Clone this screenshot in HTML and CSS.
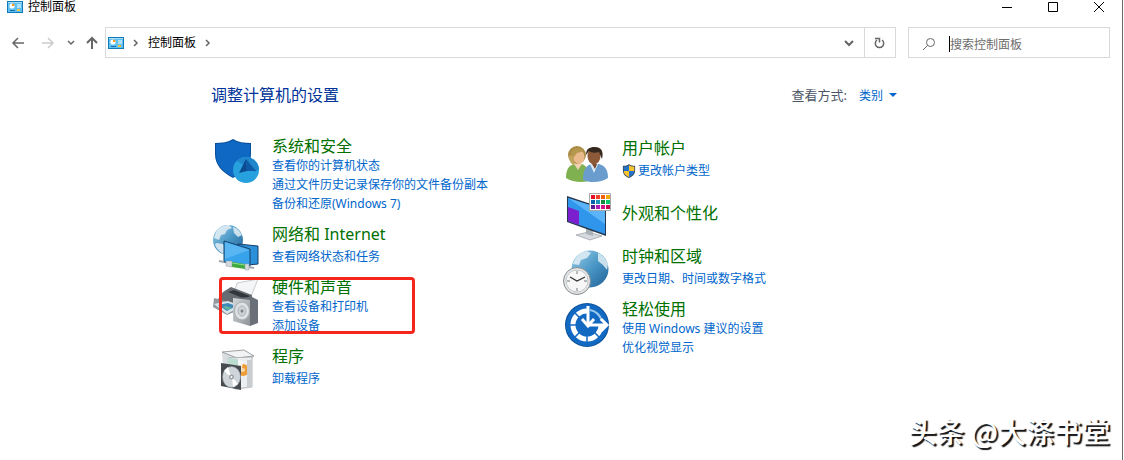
FILE: index.html
```html
<!DOCTYPE html>
<html lang="zh-CN">

<head>
  <title>控制面板</title>
  <meta charset="utf-8">
  <meta name="viewport" content="width=device-width, initial-scale=1">
  <link rel="stylesheet" href="styles.css">
</head>

<body>

  <!-- shared symbols -->
  <svg width="0" height="0" class="defs">
    <defs>
      <linearGradient id="sea" x1="0" y1="0" x2="1" y2="1">
        <stop offset="0" stop-color="#9fd0ea"/>
        <stop offset="0.5" stop-color="#4a98c6"/>
        <stop offset="1" stop-color="#1f5f96"/>
      </linearGradient>
      <linearGradient id="metal" x1="0" y1="0" x2="1" y2="1">
        <stop offset="0" stop-color="#d5d8da"/>
        <stop offset="1" stop-color="#8d9399"/>
      </linearGradient>
    </defs>
    <symbol id="panel" viewBox="0 0 16 12">
      <rect x="0.5" y="0.5" width="15" height="11" fill="#5fc0f2" stroke="#1279b8"/>
      <rect x="1" y="1" width="14" height="1" fill="#a5defa"/>
      <circle cx="5" cy="5" r="2.6" fill="#fff"/>
      <path d="M5 5V2.4A2.6 2.6 0 0 1 7.6 5z" fill="#f39a1c"/>
      <path d="M10 4h4M10 6h4" stroke="#fff"/>
      <path d="M3 9.5h5" stroke="#176aa8"/>
      <path d="M10 9h3" stroke="#f0c33c" stroke-width="2"/>
    </symbol>
  </svg>

  <div class="window">
    <header class="titlebar">
      <svg class="app-icon"><use href="#panel"/></svg>
      <span class="title">控制面板</span>
      <button class="win-btn" aria-label="最小化"><svg width="12" height="12"><path d="M1 6.5h10" stroke="#000"/></svg></button>
      <button class="win-btn" aria-label="最大化"><svg width="12" height="12"><path d="M1.5 1.5h9v9h-9z" stroke="#000" fill="none"/></svg></button>
      <button class="win-btn" aria-label="关闭"><svg width="12" height="12"><path d="M1 1l10 10M11 1L1 11" stroke="#000"/></svg></button>
    </header>

    <div class="toolbar">
      <nav class="history">
        <button class="nav-btn" aria-label="后退"><svg width="14" height="14"><path d="M13 7H2M7 2L2 7l5 5" class="line"/></svg></button>
        <button class="nav-btn" aria-label="前进" disabled><svg width="14" height="14"><path d="M1 7h11M7 2l5 5-5 5" class="line light"/></svg></button>
        <button class="nav-btn small" aria-label="最近"><svg width="8" height="8"><path d="M1 2l3 3 3-3" class="line"/></svg></button>
        <button class="nav-btn up" aria-label="上移"><svg width="14" height="14"><path d="M7 13V2M2 7l5-5 5 5" class="line thick"/></svg></button>
      </nav>
      <div class="address">
        <svg class="app-icon"><use href="#panel"/></svg>
        <svg class="sep" width="6" height="8"><path d="M1 1l3 3-3 3" class="line"/></svg>
        <a class="crumb" href="#">控制面板</a>
        <svg class="sep" width="6" height="8"><path d="M1 1l3 3-3 3" class="line"/></svg>
        <button class="addr-btn expand" aria-label="展开"><svg width="10" height="8"><path d="M1 2l4 4 4-4" class="line thick"/></svg></button>
        <button class="addr-btn refresh" aria-label="刷新"><svg width="12" height="14"><path d="M1 2.5h4.500v4M8 4a4.200 4.200 0 1 1-5 0" class="line"/></svg></button>
      </div>
      <label class="search">
        <svg width="14" height="14"><circle cx="8.5" cy="5.5" r="4" class="line thin"/><path d="M5.5 8.5L1 13" class="line thin"/></svg>
        <input type="text" placeholder="搜索控制面板" aria-label="搜索控制面板">
      </label>
    </div>

    <main>
      <div class="heading">
        <h1>调整计算机的设置</h1>
        <label for="view">查看方式:</label>
        <select id="view">
          <option>类别</option>
          <option>大图标</option>
          <option>小图标</option>
        </select>
        <svg width="8" height="4"><path d="M0 0h8L4 4z" fill="#0066cc"/></svg>
      </div>

      <div class="columns">
        <div class="column">
          <section class="item">
            <svg class="icon" viewBox="0 0 48 48">
              <path d="M22 3c5 3 11 4 18 4v11c0 11-7 18-18 24C11 36 4 29 4 18V7c7 0 13-1 18-4z" fill="#084f9c"/>
              <path d="M22 4.500c5 2 10 3.500 17 3.500V18c0 10-6 17-17 23C11 35 5 28 5 18V8C12 8 17 6.500 22 4.500z" fill="#0f68c4"/>
              <circle cx="35" cy="34" r="13" fill="#27a0de"/>
              <path d="M26 25A13 13 0 0 1 48 33l-4 3z" fill="#1f86cc"/>
              <path d="M35 23l10 12-9 0z" fill="#0f5aa8"/>
              <path d="M35 23l1 12-8 2z" fill="#0b4a90"/>
            </svg>
            <div class="text">
              <h2><a href="#">系统和安全</a></h2>
              <a href="#">查看你的计算机状态</a>
              <a href="#">通过文件历史记录保存你的文件备份副本</a>
              <a href="#">备份和还原(Windows 7)</a>
            </div>
          </section>

          <section class="item short">
            <svg class="icon" viewBox="0 0 48 48">
              <circle cx="17" cy="16" r="15" fill="url(#sea)"/>
              <path d="M5 8c3-5 8-7 13-7l3 3-5 2-2 4-4 1-2 5-5-2zM22 3c4 1 7 4 9 8l-4 2-4-4zM6 19l6 1 3 4-2 6c-5-2-8-6-9-10z" fill="#e4eff5" opacity="0.85"/>
              <path d="M27 20l20 2v18l-20 2z" fill="#2c8fda" stroke="#173f66"/>
              <path d="M13 17l26 8v17l-26-4z" fill="#37a3ea" stroke="#173f66"/>
              <path d="M14 18l24 8-24 9z" fill="#5ab6f3"/>
              <path d="M21 38l13 2v5l-13-2z" fill="#3faa3f"/>
              <path d="M21 39l13 2" stroke="#8fdc82"/>
              <path d="M8 37l5 1M37 43l6 1" stroke="#9fa8ae" stroke-width="2"/>
              <path d="M15 37h6v6l-6-1zM34 40h4v6h-4z" fill="#d3dbe0" stroke="#8f989e" stroke-width="0.5"/>
            </svg>
            <div class="text">
              <h2><a href="#">网络和 Internet</a></h2>
              <a href="#">查看网络状态和任务</a>
            </div>
          </section>

          <section class="item marked">
            <svg class="icon" viewBox="0 0 48 48">
              <path d="M26 6l21-4-8 20-16-6z" fill="#f4f5f6" stroke="#b5b9bd" stroke-width="0.7"/>
              <path d="M12 15l8-5 21 8v10l-24 9-14-9z" fill="#666c72"/>
              <path d="M17 15l6-2 16 6-5 3z" fill="#31363b"/>
              <path d="M3 21l22 6v7l-9 4-14-8z" fill="#92989e"/>
              <path d="M3 27l14-3 13 5-14 8z" fill="#d9e4eb"/>
              <path d="M7 28l10-2 8 3-9 5z" fill="#3e89b8"/>
              <path d="M14 29l7 2-4 2-5-3z" fill="#62b99d"/>
              <path d="M22 21l19-1 6 3v23l-8 3z" fill="#6a7077"/>
              <path d="M22 21l17 2v26l-17-5z" fill="url(#metal)"/>
              <ellipse cx="31" cy="34" rx="7.5" ry="9" fill="#dfe2e4" stroke="#a7acb0"/>
              <ellipse cx="31" cy="34" rx="4" ry="5" fill="#cdd1d4" stroke="#b0b5b9"/>
              <circle cx="31" cy="34" r="1.5" fill="#7b8187"/>
            </svg>
            <div class="text">
              <h2><a href="#">硬件和声音</a></h2>
              <a href="#">查看设备和打印机</a>
              <a href="#">添加设备</a>
            </div>
          </section>

          <section class="item short">
            <svg class="icon" viewBox="0 0 48 48">
              <path d="M11 6l22-2 10 6-2 3v28l-14 2-14-9z" fill="#dadddf"/>
              <path d="M11 6l22-2 10 6-17 2z" fill="#f2f3f4" stroke="#898e92" stroke-width="0.8"/>
              <path d="M17 12l24-1v30l-17 2z" fill="#eceeef" stroke="#a5a9ac" stroke-width="0.8"/>
              <path d="M17 12l10 1v25H14z" fill="#bcdccf"/>
              <circle cx="32" cy="24" r="6" fill="#ef9c35"/>
              <circle cx="32" cy="24" r="2" fill="#f8d8a8"/>
              <path d="M27 13l5 3-4 24h-1z" fill="#f8f9fa" opacity="0.8"/>
              <path d="M36 14h5v27l-5 1z" fill="#c9cdd0"/>
              <path d="M10 17l20 3v24l-20-4z" fill="#464b50"/>
              <ellipse cx="20.500" cy="31" rx="9" ry="10.5" fill="#cfd6da" stroke="#8e959b" stroke-width="0.6"/>
              <path d="M20 31l-7-6 4-4zM21 31l6 7-5 3z" fill="#fff"/>
              <circle cx="20.5" cy="31" r="2.5" fill="#9aa2a8"/>
              <circle cx="20.5" cy="31" r="1" fill="#fff"/>
            </svg>
            <div class="text">
              <h2><a href="#">程序</a></h2>
              <a href="#">卸载程序</a>
            </div>
          </section>
        </div>

        <div class="column second">
          <section class="item short">
            <svg class="icon" viewBox="0 0 48 48">
              <path d="M5 40c0-9 3-13 9-14h7c5 2 7 7 7 17-8 2-17 1-23-3z" fill="#7fb150"/>
              <path d="M13 26l4 6 4-6z" fill="#f1d1b1"/>
              <circle cx="16" cy="17" r="9" fill="#a98b45"/>
              <path d="M8 18c0 5 2 8 5 9l3-12z" fill="#c0a45b"/>
              <ellipse cx="18" cy="19" rx="5.5" ry="7" fill="#eab98c"/>
              <path d="M10 15c2-5 8-7 13-2l-7 2-4 5z" fill="#b5974e"/>
              <path d="M22 42c0-10 3-15 9-16h7c7 2 9 7 9 14-7 5-18 5-25 2z" fill="#6a9dce"/>
              <path d="M29 26l4 9 4-9z" fill="#dcebf7"/>
              <path d="M31 26l3 5 2-5z" fill="#7a4c2e"/>
              <ellipse cx="33" cy="18" rx="6.5" ry="8.5" fill="#8c5a38"/>
              <path d="M25 17c0-6 3-8 9-8 6 0 9 4 7 12l-3-7c-4 1-8 1-10-1z" fill="#34281f"/>
            </svg>
            <div class="text">
              <h2><a href="#">用户帐户</a></h2>
              <a href="#" class="admin">
                <svg class="uac" viewBox="0 0 16 16">
                  <path d="M8 0c2 2 4 2 7 2v5c0 5-3 7-7 9-4-2-7-4-7-9V2c3 0 5 0 7-2z" fill="#3d4c60"/>
                  <path d="M8 1.5V8H2V3c2 0 4 0 6-1.5zM8 8h6c0 3-2 5-6 7z" fill="#2472c8"/>
                  <path d="M8 1.5V8h6V3c-2 0-4 0-6-1.5zM8 8H2c0 3 2 5 6 7z" fill="#fbc42d"/>
                </svg>更改帐户类型</a>
            </div>
          </section>

          <section class="item single">
            <svg class="icon" viewBox="0 0 48 48">
              <path d="M15 44l12-3 14 4-12 4z" fill="#d5dade" stroke="#969ca2" stroke-width="0.7"/>
              <path d="M25 36l7 3v6l-7-2z" fill="#aab1b7"/>
              <path d="M6 5l39 13v27L6 31z" fill="#26384d"/>
              <path d="M7 7l37 12v24L7 30z" fill="#2f96ec"/>
              <path d="M7 7l37 12v14z" fill="#5ab4f7"/>
              <path d="M7 16l11 4v14L7 30z" fill="#7c20cf"/>
              <path d="M28.5 2.5h21v17h-21z" fill="#fff" stroke="#a8a8a8"/>
              <path d="M30 4h4v4h-4z" fill="#e81123"/><path d="M35 4h4v4h-4z" fill="#f0432b"/><path d="M40 4h4v4h-4z" fill="#f7630c"/><path d="M45 4h4v4h-4z" fill="#f7a80c"/>
              <path d="M30 9h4v4h-4z" fill="#0063b1"/><path d="M35 9h4v4h-4z" fill="#1a96bd"/><path d="M40 9h4v4h-4z" fill="#10893e"/><path d="M45 9h4v4h-4z" fill="#00c76a"/>
              <path d="M30 14h4v4h-4z" fill="#5a189a"/><path d="M35 14h4v4h-4z" fill="#b01cb8"/><path d="M40 14h4v4h-4z" fill="#d3108c"/><path d="M45 14h4v4h-4z" fill="#c30052"/>
            </svg>
            <div class="text">
              <h2><a href="#">外观和个性化</a></h2>
            </div>
          </section>

          <section class="item short">
            <svg class="icon" viewBox="0 0 48 48">
              <circle cx="29" cy="23" r="18.5" fill="url(#sea)"/>
              <path d="M12 18c2-7 7-12 14-13l4 2-4 5-6 2-2 5zM37 7c5 2 8 6 10 11l-1 6-4-5-5-4z" fill="#e2eef5" opacity="0.85"/>
              <circle cx="16" cy="35" r="13.5" fill="#e3e5e6" stroke="#868c91"/>
              <circle cx="16" cy="35" r="11" fill="#f7f7f7" stroke="#c3c7ca"/>
              <path d="M16 25v3M16 42v3M6 35h3M23 35h3" stroke="#777"/>
              <path d="M9 31l7 4 8-4" fill="none" stroke="#333" stroke-width="1.3"/>
            </svg>
            <div class="text">
              <h2><a href="#">时钟和区域</a></h2>
              <a href="#">更改日期、时间或数字格式</a>
            </div>
          </section>

          <section class="item">
            <svg class="icon" viewBox="0 0 48 48">
              <circle cx="26" cy="26" r="22" fill="#0b4f97"/>
              <circle cx="26" cy="26" r="21" fill="#1269c2"/>
              <circle cx="26" cy="26" r="14" fill="none" stroke="#fff" stroke-width="5"/>
              <path d="M26 26V9a17 17 0 0 1 17 17z" fill="#1269c2"/>
              <path d="M29 11a16 16 0 0 1 12 11" fill="none" stroke="#9cc8ee" stroke-width="2"/>
              <path d="M26 26L11 11M26 26H8M26 26L11 41M26 26v18M26 26l15 15" stroke="#1269c2" stroke-width="1.5"/>
              <circle cx="26" cy="26" r="10" fill="#1269c2"/>
              <path d="M27 7v19M21 20l6 7 6-7" fill="none" stroke="#fff" stroke-width="3"/>
              <path d="M27 26h18M40 20l6 6-6 6" fill="none" stroke="#fff" stroke-width="3"/>
            </svg>
            <div class="text">
              <h2><a href="#">轻松使用</a></h2>
              <a href="#">使用 Windows 建议的设置</a>
              <a href="#">优化视觉显示</a>
            </div>
          </section>
        </div>
      </div>
    </main>

    <div class="watermark">头条 @大涤书堂</div>
  </div>

</body>

</html>
```

FILE: styles.css
```css
*,
*::after {
  box-sizing: border-box;
  margin: 0;
  padding: 0;
}

body {
  font-family: "Noto Sans", "Noto Sans CJK SC", sans-serif;
  font-size: 12px;
  line-height: 19px;
  color: #000;
  background-color: #fff;
}

button {
  border: none;
  background: none;
  display: flex;
  align-items: center;
  justify-content: center;
}

svg {
  display: block;
  flex: none;
}

a {
  color: #0066cc;
  text-decoration: none;
}

.defs {
  position: absolute;
}

.window {
  position: relative;
  min-height: 100vh;
  margin-right: 1px;
  border-right: 1px solid #6b6b6b;
}

/* Title bar */
.titlebar {
  display: flex;
  align-items: center;
  height: 13px;
  padding-left: 7px;
}

.app-icon {
  width: 16px;
  height: 12px;
}

.title {
  margin-left: 5px;
  margin-right: auto;
}

.win-btn {
  width: 46px;
  height: 13px;
}

/* Navigation and address bar */
.toolbar {
  display: flex;
  height: 45px;
  padding: 14px 12px 0 6px;
}

.history {
  display: flex;
  align-items: center;
  width: 99px;
}

.nav-btn {
  width: 24px;
  height: 24px;
  margin-right: 6px;
}

.nav-btn.small {
  width: 10px;
  margin-right: 9px;
}

.nav-btn.up {
  width: 14px;
  margin-right: 0;
}

.line {
  fill: none;
  stroke: #666;
  stroke-width: 1.5;
}

.line.thick {
  stroke-width: 2;
}

.line.thin {
  stroke-width: 1;
}

.line.light {
  stroke: #ccc;
}

.address {
  display: flex;
  align-items: center;
  flex: 1;
  padding-left: 2px;
  border: 1px solid #d9d9d9;
}

.sep {
  margin: 0 9px;
}

.crumb {
  color: #000;
}

.addr-btn {
  width: 31px;
  height: 29px;
}

.expand {
  margin-left: auto;
}

.refresh {
  border-left: 1px solid #d9d9d9;
}

.search {
  display: flex;
  align-items: center;
  width: 202px;
  margin-left: 12px;
  padding: 3px 12px 0 13px;
  border: 1px solid #d9d9d9;
}

.search svg {
  margin-right: 13px;
}

.search input {
  width: 100%;
  height: 16px;
  border: none;
  border-left: 1px solid #000;
  outline: none;
  font: inherit;
}

.search input::placeholder {
  color: #6d6d6d;
}

/* Content */
main {
  max-width: 700px;
  margin: 0 auto;
  padding-top: 27px;
}

.heading {
  display: flex;
  align-items: center;
  padding-right: 14px;
}

.heading h1 {
  margin-right: auto;
  font-size: 16px;
  font-weight: normal;
  line-height: 20px;
  color: #003399;
}

.heading label {
  font-size: 13px;
  color: #4c5566;
}

.heading select {
  width: 24px;
  margin: 0 6px 0 12px;
  border: none;
  background: none;
  appearance: none;
  font: inherit;
  color: #0066cc;
}

.columns {
  display: grid;
  grid-template-columns: 1fr 1fr;
  margin-top: 31px;
}

.column {
  display: flex;
  flex-direction: column;
  gap: 11px;
}

.column.second {
  padding-top: 2px;
}

.item {
  display: flex;
  position: relative;
}

/* the icon may hang a little below its two lines of text */
.icon {
  width: 48px;
  height: 48px;
  margin: 0 13px -6px 0;
  overflow: visible;
}

.text {
  display: flex;
  flex-direction: column;
  align-items: flex-start;
}

.item h2 {
  font-size: 16px;
  font-weight: normal;
  line-height: 20px;
}

.item h2 a {
  color: #007000;
}

.short h2 {
  margin-bottom: 3px;
}

.single {
  min-height: 44px;
}

.single .text {
  justify-content: center;
}

.admin {
  display: flex;
  align-items: center;
}

.uac {
  width: 14px;
  height: 16px;
  margin-right: 2px;
}

/* Red frame around the hardware entry */
.marked::after {
  content: "";
  position: absolute;
  top: 0;
  left: 8px;
  width: 196px;
  height: 57px;
  border: 3px solid #f5261c;
  border-radius: 4px;
  pointer-events: none;
}

.watermark {
  position: absolute;
  right: 12px;
  bottom: 12px;
  font-family: "Noto Sans CJK SC", sans-serif;
  font-size: 28px;
  font-weight: 500;
  line-height: 34px;
  color: #fff;
  text-shadow: 2px 2px 1px #111;
}
```
